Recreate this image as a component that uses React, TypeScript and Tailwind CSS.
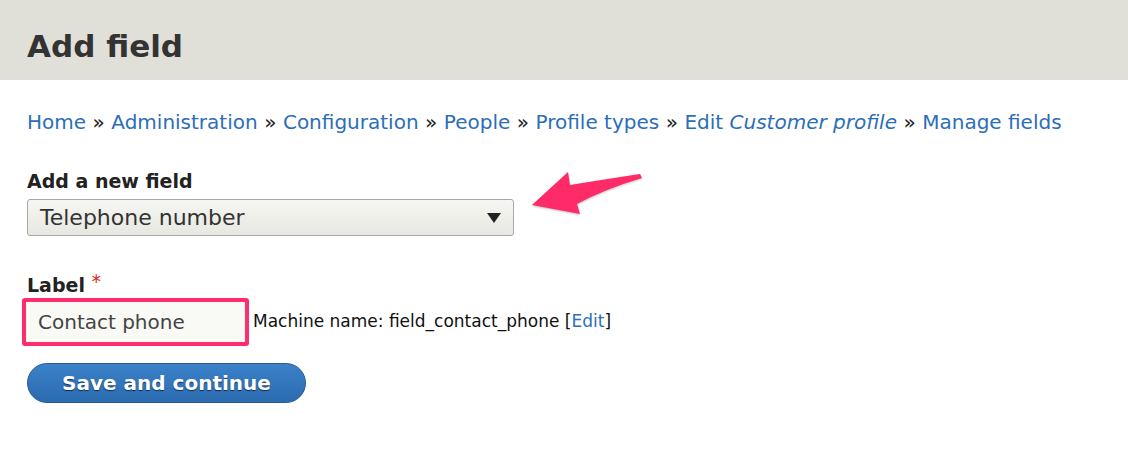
const crumbs = ["Home", "Administration", "Configuration", "People", "Profile types"];

function Sep() {
  return <span className="mx-[6.5px] text-[#222]">»</span>;
}

export default function App() {
  return (
    <div className="min-h-[458px] w-[1128px] bg-white font-['DejaVu_Sans',sans-serif] text-[#333]">
      <header className="h-[80px] bg-[#e0e0d8] pl-[27px] pt-[24px]">
        <h1 className="text-[31px] font-bold leading-[44px] text-[#333]">Add field</h1>
      </header>

      <main className="px-[27px]">
        <nav className="mt-[28px] text-[20px] leading-[28px] text-[#2c6eb8]">
          {crumbs.map((c) => (
            <span key={c}>
              <a>{c}</a>
              <Sep />
            </span>
          ))}
          <a>
            Edit <em>Customer profile</em>
          </a>
          <Sep />
          <a>Manage fields</a>
        </nav>

        <div className="relative mt-[33px]">
          <label className="block text-[19px] font-bold leading-[24px] text-[#222]">Add a new field</label>
          <div className="mt-[6px] flex h-[37px] w-[487px] items-center justify-between rounded-[3px] border border-[#a8a8a8] bg-gradient-to-b from-[#f6f6f2] to-[#e8e8e2] pl-[12px] pr-[12px] text-[22px] text-[#333]">
            <span>Telephone number</span>
            <svg width="14" height="10" viewBox="0 0 14 10">
              <path d="M0 0 L14 0 L7 10 Z" fill="#222" />
            </svg>
          </div>
          <svg
            className="absolute left-[500px] -top-[2px] drop-shadow-[0_1px_1px_rgba(0,0,0,0.25)]"
            width="120"
            height="52"
            viewBox="0 0 120 52"
          >
            <path
              d="M5 38 L41 5 L43 18 Q80 12 113 7 L115 11 Q78 22 50 37 L53 47 Z"
              fill="#ff2a68"
            />
          </svg>
        </div>

        <div className="mt-[37px]">
          <label className="block text-[19px] font-bold leading-[24px] text-[#222]">
            Label <span className="relative -top-[4px] font-normal text-[#e0261a]">*</span>
          </label>
          <div className="mt-[1px] flex items-center">
            <div className="-ml-[5px] flex h-[48px] w-[227px] items-center rounded-[3px] border-[4px] border-[#ff2d6e] bg-[#f9f9f6] pl-[12px] text-[20px] text-[#444]">
              Contact phone
            </div>
            <span className="ml-[4px] text-[17px] text-[#111]">
              Machine name: field_contact_phone [<a className="text-[#2c6eb8]">Edit</a>]
            </span>
          </div>
        </div>

        <button className="mt-[17px] h-[40px] w-[279px] rounded-full border border-[#2a5a95] bg-gradient-to-b from-[#3b82c8] to-[#2b6bb0] text-[20px] font-bold text-white [text-shadow:0_1px_1px_rgba(0,0,0,0.6)]">
          Save and continue
        </button>
      </main>
    </div>
  );
}
